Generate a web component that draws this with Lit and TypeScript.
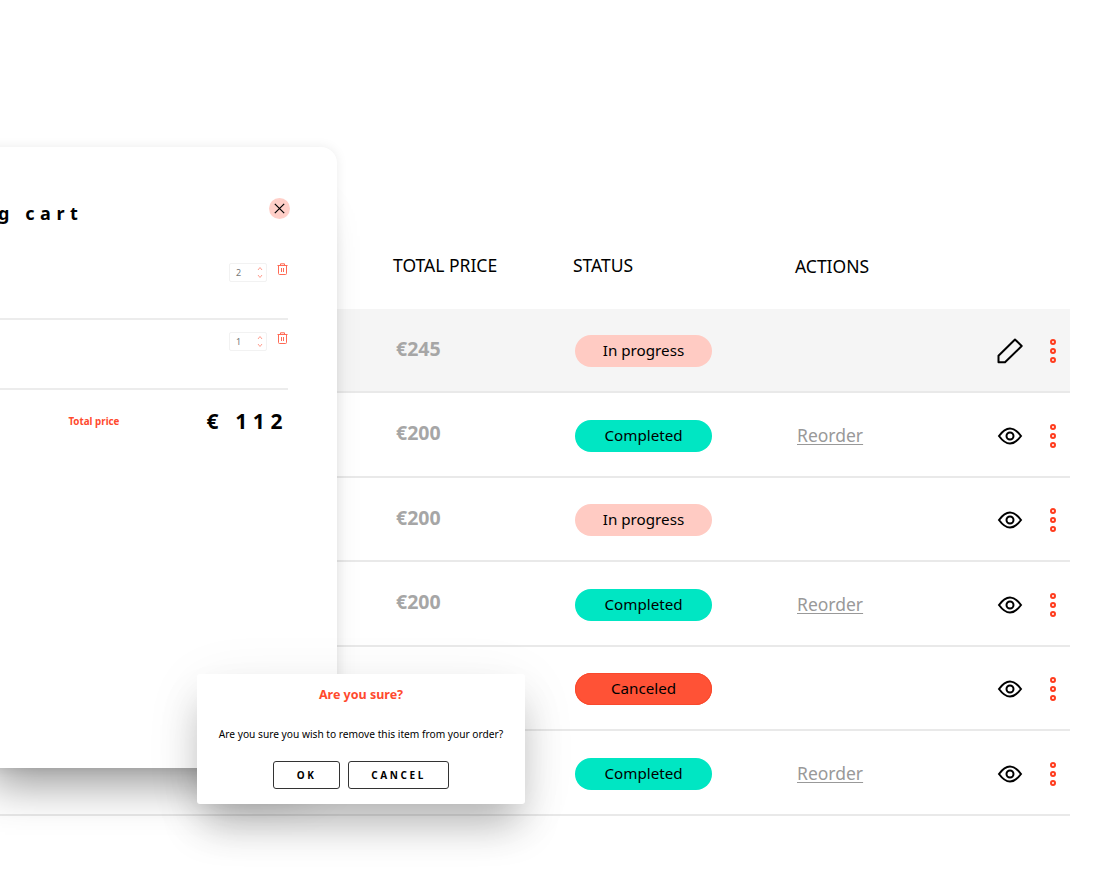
import { LitElement, html, css, svg } from "lit";
import { customElement } from "lit/decorators.js";

const rows = [
  { price: "€245", status: "In progress", cls: "prog", reorder: false, edit: true },
  { price: "€200", status: "Completed", cls: "done", reorder: true },
  { price: "€200", status: "In progress", cls: "prog", reorder: false },
  { price: "€200", status: "Completed", cls: "done", reorder: true },
  { price: "", status: "Canceled", cls: "canc", reorder: false },
  { price: "", status: "Completed", cls: "done", reorder: true },
];

const pencil = svg`<svg class="ico" width="26" height="26" viewBox="0 0 26 26" fill="none" stroke="#000" stroke-width="2" stroke-linejoin="round"><path d="M18 1.5 L24.7 8 L8 24.3 L1.5 24.3 L1.5 17.7 Z"/></svg>`;
const eye = svg`<svg class="ico" width="26" height="26" viewBox="0 0 26 26" fill="none" stroke="#000" stroke-width="2"><path d="M2 13 C6 7.5 9.5 5.5 13 5.5 C16.5 5.5 20 7.5 24 13 C20 18.5 16.5 20.5 13 20.5 C9.5 20.5 6 18.5 2 13 Z"/><circle cx="13" cy="13" r="3.5"/></svg>`;
const dots = svg`<svg width="8" height="26" viewBox="0 0 8 26" fill="none" stroke="#ff3c1e" stroke-width="2"><circle cx="4" cy="4" r="2"/><circle cx="4" cy="13" r="2"/><circle cx="4" cy="22" r="2"/></svg>`;
const trash = svg`<svg width="11" height="12" viewBox="0 0 11 12" fill="none" stroke="#ff6a55" stroke-width="1"><path d="M.5 2.5h10M3.5 2.5V.8h4v1.7M1.5 2.5v8a1 1 0 0 0 1 1h6a1 1 0 0 0 1-1v-8M4.5 5v4M6.5 5v4"/></svg>`;
const spin = svg`<svg width="6" height="13" viewBox="0 0 6 13" fill="none" stroke="#ff9d8e" stroke-width="1"><path d="M1 4l2-2.5L5 4M1 9l2 2.5L5 9"/></svg>`;

@customElement("app-root")
export class AppRoot extends LitElement {
  static styles = css`
    :host { display: block; position: relative; width: 1100px; height: 880px; overflow: hidden; background: #fff; font-family: "Noto Sans", sans-serif; color: #000; }
    .table { width: 1070px; padding-top: 253px; }
    .head { display: grid; grid-template-columns: 393px 180px 222px 1fr; height: 55.5px; font-size: 17.5px; line-height: 24px; }
    .head span:nth-child(4) { margin-top: 1px; }
    .row { display: grid; grid-template-columns: 396px 179px 222px 1fr 26px 47px; align-items: center; height: 84.5px; box-sizing: border-box; padding-top: 3px; border-bottom: 2px solid #e9e9e9; }
    .row.first { background: #f5f5f5; }
    .price { grid-column: 2; font-size: 19.5px; font-weight: 700; color: #a6a6a6; margin-top: -6px; }
    .pill { grid-column: 3; width: 137px; height: 32px; box-sizing: border-box; padding-bottom: 2px; border-radius: 16px; display: flex; align-items: center; justify-content: center; font-size: 15.2px; }
    .pill.prog { background: #ffcbc3; }
    .pill.done { background: #00e6c3; }
    .pill.canc { background: #ff5236; box-shadow: inset 0 0 0 1px #f9492d; }
    .actions { grid-column: 4; padding-bottom: 2px; }
    .reorder { font-size: 17.5px; color: #999; text-decoration: underline; text-underline-offset: 2px; }
    .ico { grid-column: 5; display: block; }
    .dots { grid-column: 6; padding-left: 26px; display: flex; }
    .cart { position: absolute; left: -40px; top: 147px; width: 377px; height: 621px; box-sizing: border-box; background: #fff; border-radius: 16px; box-shadow: 0 0 12px rgba(0,0,0,.08), 0 44px 44px -30px rgba(0,0,0,.44); padding: 0 49px 0 40px; display: flex; flex-direction: column; }
    .cart-head { height: 92px; flex: none; display: flex; align-items: flex-end; justify-content: space-between; }
    .title { font-size: 18px; font-weight: 700; letter-spacing: 5.6px; white-space: nowrap; margin-left: -114px; line-height: 24px; margin-bottom: 14px; }
    .close { width: 21px; height: 21px; border-radius: 50%; background: #ffcfc8; display: flex; align-items: center; justify-content: center; margin-right: -2px; margin-bottom: 20px; }
    .item { height: 70px; flex: none; box-sizing: border-box; border-bottom: 2px solid #ececec; display: flex; justify-content: flex-end; gap: 10px; align-items: flex-start; padding-top: 12px; }
    .cart-head + .item { height: 81px; padding-top: 24px; }
    .qty { width: 38px; height: 19px; box-sizing: border-box; border: 1px solid #f2f2f2; border-radius: 2px; display: flex; align-items: center; justify-content: space-between; padding: 0 3px 0 6px; font-size: 9px; color: #777; }
    .trash { width: 11px; display: flex; }
    .total { display: flex; align-items: center; justify-content: flex-end; height: 62px; }
    .total .lbl { font-size: 9.8px; font-weight: 700; color: #ff4a2e; margin-right: 87px; }
    .total .val { font-size: 21px; font-weight: 700; letter-spacing: 5.6px; white-space: pre; margin-right: 0; }
    .dialog { position: absolute; left: 197px; top: 674px; width: 328px; height: 130px; background: #fff; border-radius: 3px; box-shadow: 0 26px 40px -6px rgba(0,0,0,.26), 0 10px 60px rgba(0,0,0,.07); display: flex; flex-direction: column; align-items: center; }
    .d-title { font-size: 12.5px; font-weight: 700; color: #ff4a2e; line-height: 17px; margin-top: 12px; }
    .d-text { font-size: 10.2px; line-height: 14px; margin-top: 24px; white-space: nowrap; }
    .btns { display: flex; gap: 8px; margin-top: 20px; }
    .btn { height: 28px; box-sizing: border-box; border: 1px solid #333; border-radius: 3px; display: flex; align-items: center; justify-content: center; font-size: 10px; font-weight: 700; letter-spacing: 2.6px; }
    .btn.ok { width: 67px; }
    .btn.cancel { width: 101px; }
  `;

  render() {
    return html`
      <div class="table">
        <div class="head"><span></span><span>TOTAL PRICE</span><span>STATUS</span><span>ACTIONS</span></div>
        ${rows.map((r, i) => html`
          <div class="row ${i === 0 ? "first" : ""}">
            <div class="price">${r.price}</div>
            <div class="pill ${r.cls}">${r.status}</div>
            <div class="actions">${r.reorder ? html`<span class="reorder">Reorder</span>` : ""}</div>
            ${r.edit ? pencil : eye}
            <div class="dots">${dots}</div>
          </div>`)}
      </div>
      <div class="cart">
        <div class="cart-head">
          <div class="title">Shopping cart</div>
          <div class="close"><svg width="11" height="11" viewBox="0 0 11 11" stroke="#000" stroke-width="1.2"><path d="M.8.8l9.4 9.4M10.2.8L.8 10.2"/></svg></div>
        </div>
        <div class="item"><div class="qty">2${spin}</div><div class="trash">${trash}</div></div>
        <div class="item"><div class="qty">1${spin}</div><div class="trash">${trash}</div></div>
        <div class="total"><span class="lbl">Total price</span><span class="val">€ 112</span></div>
      </div>
      <div class="dialog">
        <div class="d-title">Are you sure?</div>
        <div class="d-text">Are you sure you wish to remove this item from your order?</div>
        <div class="btns"><div class="btn ok">OK</div><div class="btn cancel">CANCEL</div></div>
      </div>
    `;
  }
}
